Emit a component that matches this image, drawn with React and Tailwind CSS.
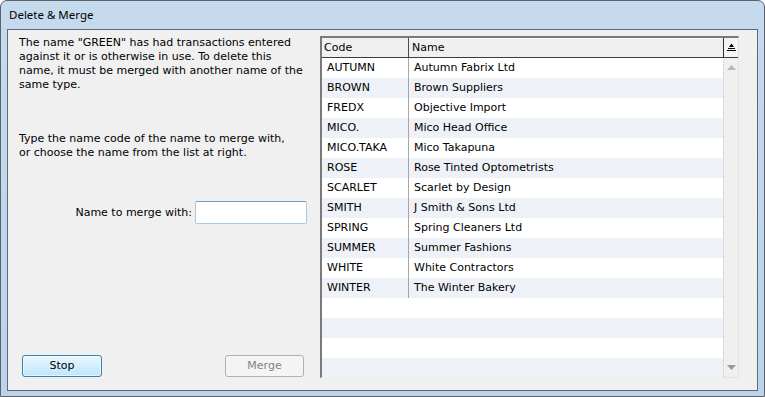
const rows = [
  ["AUTUMN", "Autumn Fabrix Ltd"],
  ["BROWN", "Brown Suppliers"],
  ["FREDX", "Objective Import"],
  ["MICO.", "Mico Head Office"],
  ["MICO.TAKA", "Mico Takapuna"],
  ["ROSE", "Rose Tinted Optometrists"],
  ["SCARLET", "Scarlet by Design"],
  ["SMITH", "J Smith & Sons Ltd"],
  ["SPRING", "Spring Cleaners Ltd"],
  ["SUMMER", "Summer Fashions"],
  ["WHITE", "White Contractors"],
  ["WINTER", "The Winter Bakery"],
];

const body = { fontFamily: '"DejaVu Sans", Verdana, sans-serif' };

function SortIcon() {
  return (
    <svg width="9" height="9" viewBox="0 0 9 9">
      <path d="M4.5 0.5 L7 4 L2 4 Z" fill="#000" />
      <rect x="1" y="5" width="7" height="1" fill="#000" />
      <rect x="0" y="7" width="9" height="1" fill="#000" />
    </svg>
  );
}

function NameList() {
  const filled = [...rows, ...Array(4).fill(["", ""])];
  return (
    <div className="mt-[6px] flex h-[342px] w-[419px] flex-col border-l-2 border-t-2 border-b border-r border-l-[#7a7a7a] border-t-[#7a7a7a] border-b-[#e3e3e3] border-r-[#e3e3e3] bg-white">
      <div className="flex h-[20px] shrink-0 border-b border-[#3c3c3c] bg-[#f0f0f0] text-[11px] text-black">
        <div className="flex w-[87px] items-end border-r border-[#4a4a4a] pb-[1px] pl-[2px]">Code</div>
        <div className="flex flex-1 items-end border-t border-t-white pb-[1px] pl-[3px]">Name</div>
        <div className="flex w-[15px] items-center justify-center border-l border-[#2e2e2e] bg-[#f4f4f4]">
          <SortIcon />
        </div>
      </div>
      <div className="flex min-h-0 flex-1">
        <div className="flex-1">
          {filled.map(([code, name], i) => (
            <div
              key={i}
              className={`flex h-[20px] items-center text-[11px] text-black ${i % 2 ? "bg-[#eef2f8]" : "bg-white"}`}
            >
              <div className="w-[87px] shrink-0 whitespace-nowrap border-r border-[#a6a6a6] pl-[5px] leading-[20px]">{code}</div>
              <div className="flex-1 whitespace-nowrap pl-[5px] leading-[20px]">{name}</div>
            </div>
          ))}
        </div>
        <div className="flex w-[15px] flex-col items-center justify-between border-l border-dotted border-[#c8c8c8] bg-[#f0f0f0] py-[7px]">
          <svg width="9" height="5" viewBox="0 0 9 5">
            <path d="M4.5 0 L9 5 L0 5 Z" fill="#b8b8b8" />
          </svg>
          <svg width="9" height="5" viewBox="0 0 9 5">
            <path d="M0 0 L9 0 L4.5 5 Z" fill="#9a9a9a" />
          </svg>
        </div>
      </div>
    </div>
  );
}

export default function App() {
  return (
    <div className="h-[397px] w-[765px] bg-white">
      <div className="flex h-[397px] w-[765px] flex-col rounded-t-[7px] border border-[#59626d] bg-gradient-to-b from-[#c6daee] to-[#bcd3ea] px-[6px] pb-[5px]">
        <div
          className="flex h-[28px] shrink-0 items-center pl-[2px] text-[11.5px] text-black"
          style={{ fontFamily: '"Noto Sans", "Open Sans", sans-serif' }}
        >
          Delete &amp; Merge
        </div>
        <div className="flex min-h-0 flex-1 border border-[#5e6a77] bg-[#f0f0f0]" style={body}>
          <div className="flex w-[312px] shrink-0 flex-col pl-[11px] pt-[6px] text-[11px] leading-[14px] text-black">
            <p className="whitespace-nowrap">
              The name "GREEN" has had transactions entered
              <br />
              against it or is otherwise in use. To delete this
              <br />
              name, it must be merged with another name of the
              <br />
              same type.
            </p>
            <p className="mt-[40px] whitespace-nowrap">
              Type the name code of the name to merge with,
              <br />
              or choose the name from the list at right.
            </p>
            <div className="mt-[41px] flex items-center justify-end gap-[3px] pr-[13px]">
              <span>Name to merge with:</span>
              <input className="h-[23px] w-[112px] rounded-[2px] border border-[#abc9e3] border-t-[#6f9dc9] bg-white px-1 outline-none" />
            </div>
            <div className="mt-auto flex justify-between pb-[13px] pl-[3px] pr-[16px]">
              <button className="h-[22px] w-[80px] rounded-[3px] border border-[#3c7fb1] bg-gradient-to-b from-[#eaf6fd] to-[#bee6fd] text-black shadow-[inset_0_0_0_1px_rgba(255,255,255,0.6)]">
                Stop
              </button>
              <button
                disabled
                className="h-[22px] w-[79px] rounded-[3px] border border-[#adb2b5] bg-[#f4f4f4] text-[#838383]"
              >
                Merge
              </button>
            </div>
          </div>
          <NameList />
        </div>
      </div>
    </div>
  );
}
